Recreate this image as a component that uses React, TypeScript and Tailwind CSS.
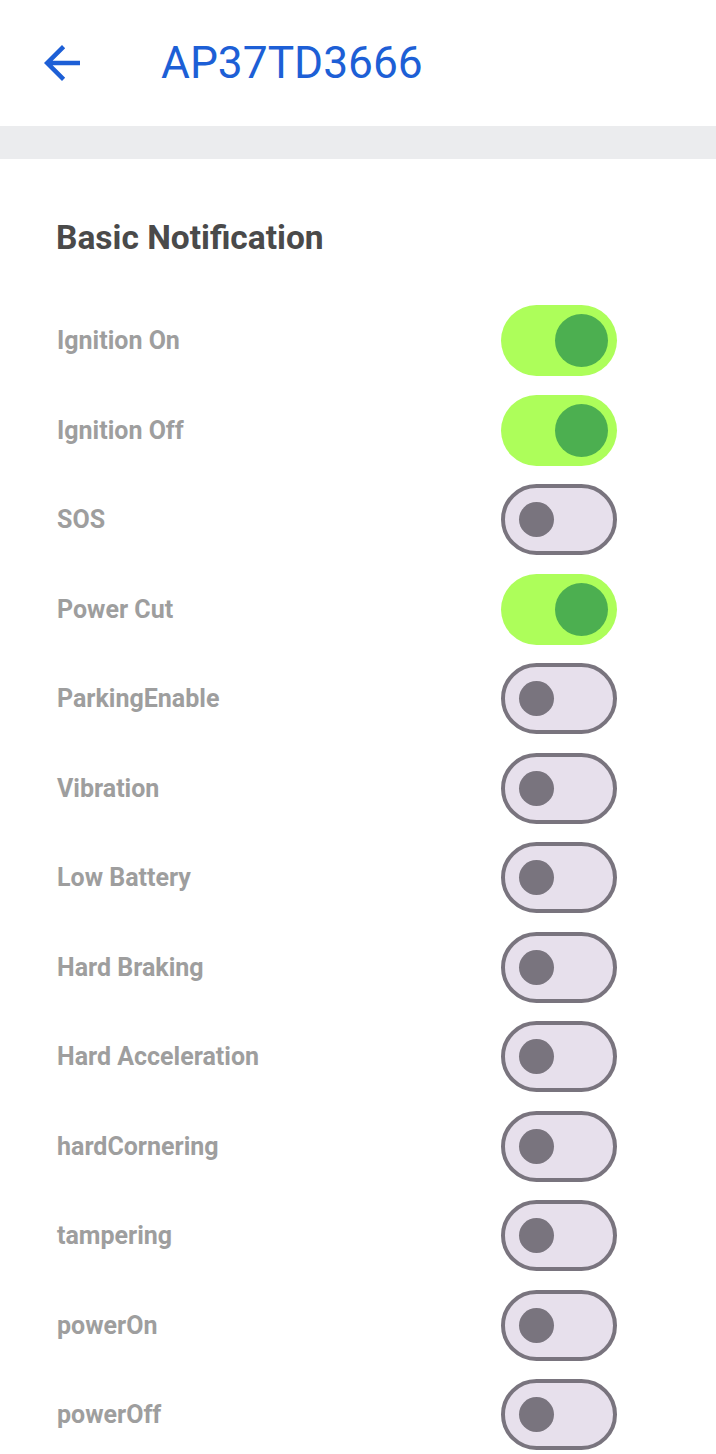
import React, { useState } from 'react';

// Notification settings for a single vehicle
const notifications: { label: string; on: boolean }[] = [
  { label: 'Ignition On', on: true },
  { label: 'Ignition Off', on: true },
  { label: 'SOS', on: false },
  { label: 'Power Cut', on: true },
  { label: 'ParkingEnable', on: false },
  { label: 'Vibration', on: false },
  { label: 'Low Battery', on: false },
  { label: 'Hard Braking', on: false },
  { label: 'Hard Acceleration', on: false },
  { label: 'hardCornering', on: false },
  { label: 'tampering', on: false },
  { label: 'powerOn', on: false },
  { label: 'powerOff', on: false },
];

function Toggle({ checked, onChange }: { checked: boolean; onChange: () => void }) {
  return (
    <button
      onClick={onChange}
      className={
        checked
          ? 'relative w-[116px] h-[71px] rounded-full bg-[#adfe5a] flex items-center justify-end pr-[9px]'
          : 'relative w-[116px] h-[71px] rounded-full bg-[#e7e0ec] border-[4px] border-[#79747e] flex items-center justify-start pl-[14px]'
      }
    >
      {checked ? (
        <span className="block w-[53px] h-[53px] rounded-full bg-[#4caf50]" />
      ) : (
        <span className="block w-[35px] h-[35px] rounded-full bg-[#79747e]" />
      )}
    </button>
  );
}

export default function App() {
  const [items, setItems] = useState(notifications);

  const toggle = (i: number) =>
    setItems((prev) => prev.map((it, idx) => (idx === i ? { ...it, on: !it.on } : it)));

  return (
    <main className="min-h-screen bg-white font-['Roboto','Liberation_Sans',sans-serif]">
      {/* App bar */}
      <header className="h-[126px] flex items-center">
        <button className="ml-[35px] w-[54px] h-[54px] text-[#1d5fd6]">
          <svg viewBox="0 0 24 24" className="w-[54px] h-[54px]" fill="currentColor">
            <path d="M20 11H7.83l5.59-5.59L12 4l-8 8 8 8 1.41-1.41L7.83 13H20v-2z" />
          </svg>
        </button>
        <h1 className="ml-[72px] text-[44.3px] leading-none text-[#1d5fd6] font-normal">AP37TD3666</h1>
      </header>

      <div className="h-[33px] bg-[#ebecee]" />

      {/* Settings list */}
      <section className="pt-[59px]">
        <h2 className="pl-[56px] text-[33.5px] leading-[40px] font-bold text-[#4a4a4a]">Basic Notification</h2>
        <ul className="mt-[38px]">
          {items.map((it, i) => (
            <li key={it.label} className="h-[89.5px] flex items-center justify-between pl-[57px] pr-[99px]">
              <span className="text-[25px] font-bold text-[#9e9e9e]">{it.label}</span>
              <Toggle checked={it.on} onChange={() => toggle(i)} />
            </li>
          ))}
        </ul>
      </section>
    </main>
  );
}
